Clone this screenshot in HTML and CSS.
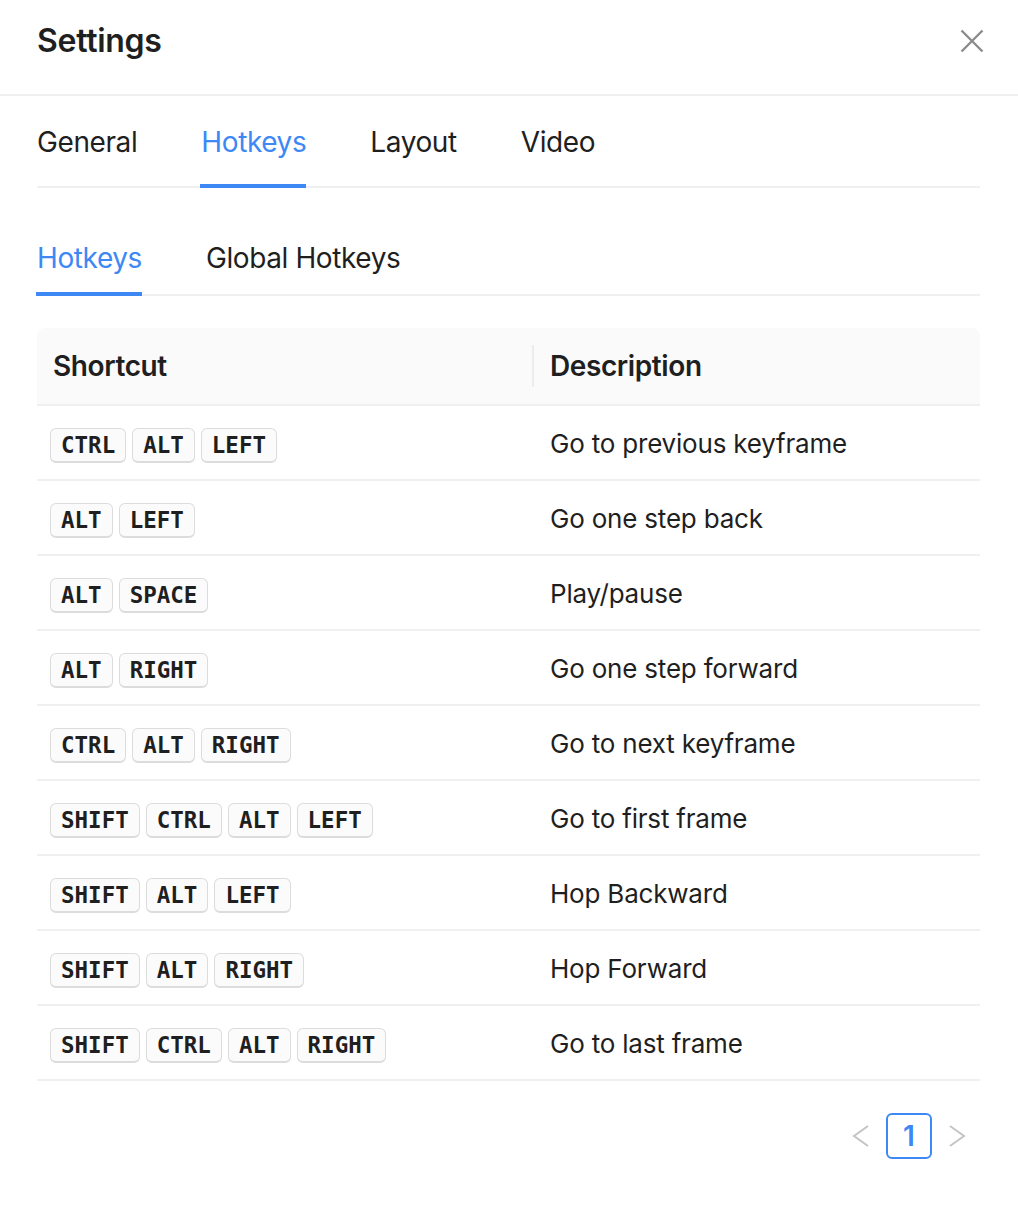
FILE: index.html
```html
<!DOCTYPE html>
<html lang="en">
<head>
<meta charset="utf-8">
<title>Settings</title>
<link rel="stylesheet" href="styles.css">
</head>
<body>
<div class="modal">
  <header class="modal-header">
    <h1 class="title">Settings</h1>
    <button class="close" aria-label="Close">
      <svg width="24" height="24" viewBox="0 0 24 24"><path d="M1.5 1.5 L22.5 22.5 M22.5 1.5 L1.5 22.5" stroke="#8c8c8c" stroke-width="2.4" fill="none"/></svg>
    </button>
  </header>
  <div class="modal-body">
    <nav class="tabs tabs-lg">
      <div class="tab">General</div>
      <div class="tab active">Hotkeys</div>
      <div class="tab">Layout</div>
      <div class="tab">Video</div>
    </nav>
    <nav class="tabs tabs-sm">
      <div class="tab active">Hotkeys</div>
      <div class="tab">Global Hotkeys</div>
    </nav>
    <table class="table">
      <thead>
        <tr><th class="col-keys">Shortcut</th><th class="col-desc">Description</th></tr>
      </thead>
      <tbody>
        <tr><td class="keys"><kbd>CTRL</kbd><kbd>ALT</kbd><kbd>LEFT</kbd></td><td>Go to previous keyframe</td></tr>
        <tr><td class="keys"><kbd>ALT</kbd><kbd>LEFT</kbd></td><td>Go one step back</td></tr>
        <tr><td class="keys"><kbd>ALT</kbd><kbd>SPACE</kbd></td><td>Play/pause</td></tr>
        <tr><td class="keys"><kbd>ALT</kbd><kbd>RIGHT</kbd></td><td>Go one step forward</td></tr>
        <tr><td class="keys"><kbd>CTRL</kbd><kbd>ALT</kbd><kbd>RIGHT</kbd></td><td>Go to next keyframe</td></tr>
        <tr><td class="keys"><kbd>SHIFT</kbd><kbd>CTRL</kbd><kbd>ALT</kbd><kbd>LEFT</kbd></td><td>Go to first frame</td></tr>
        <tr><td class="keys"><kbd>SHIFT</kbd><kbd>ALT</kbd><kbd>LEFT</kbd></td><td>Hop Backward</td></tr>
        <tr><td class="keys"><kbd>SHIFT</kbd><kbd>ALT</kbd><kbd>RIGHT</kbd></td><td>Hop Forward</td></tr>
        <tr><td class="keys"><kbd>SHIFT</kbd><kbd>CTRL</kbd><kbd>ALT</kbd><kbd>RIGHT</kbd></td><td>Go to last frame</td></tr>
      </tbody>
    </table>
    <div class="pagination">
      <span class="page-nav disabled">
        <svg width="46" height="46" viewBox="0 0 46 46"><polyline points="30,13 16,23 30,33" fill="none" stroke="#c4c4c4" stroke-width="2"/></svg>
      </span>
      <span class="page-item active">1</span>
      <span class="page-nav disabled">
        <svg width="46" height="46" viewBox="0 0 46 46"><polyline points="16,13 30,23 16,33" fill="none" stroke="#c4c4c4" stroke-width="2"/></svg>
      </span>
    </div>
  </div>
</div>
</body>
</html>
```

FILE: styles.css
```css
* { box-sizing: border-box; }

html, body {
  margin: 0;
  padding: 0;
  background: #ffffff;
}

body {
  font-family: "Inter", "Noto Sans", "Liberation Sans", sans-serif;
  color: #1f1f1f;
}

.modal {
  width: 1018px;
}

.modal-header {
  display: flex;
  justify-content: space-between;
  align-items: flex-start;
  height: 96px;
  padding: 19px 34px 0 37px;
  border-bottom: 2px solid #f0f0f0;
}

.title {
  margin: 0;
  font-size: 32px;
  line-height: 44px;
  font-weight: 600;
  color: #1f1f1f;
  letter-spacing: -0.3px;
}

.close {
  margin-top: 10px;
  padding: 0;
  border: 0;
  background: transparent;
  width: 24px;
  height: 24px;
  display: flex;
}

.modal-body {
  padding: 0 38px 0 37px;
}

.tabs {
  display: flex;
  gap: 64px;
  border-bottom: 2px solid #f0f0f0;
}

.tab {
  position: relative;
  font-size: 28px;
  line-height: 44px;
  letter-spacing: -0.4px;
  color: #1f1f1f;
  white-space: nowrap;
}

.tabs-lg .tab {
  padding: 24px 0 22px;
}

.tabs-sm {
  margin-top: 32px;
}

.tabs-sm .tab {
  padding: 16px 0 14px;
}

.tab.active {
  color: #3d88f5;
}

.tab.active::after {
  content: "";
  position: absolute;
  left: -1px;
  right: 0;
  bottom: -2px;
  height: 4px;
  background: #3d88f5;
}

.table {
  width: 100%;
  margin-top: 32px;
  border-collapse: separate;
  border-spacing: 0;
  font-size: 26px;
  line-height: 44px;
}

.table th {
  position: relative;
  height: 78px;
  padding: 0 16px;
  text-align: left;
  font-size: 28px;
  font-weight: 600;
  letter-spacing: -0.4px;
  background: #fafafa;
  border-bottom: 2px solid #f0f0f0;
  color: #1f1f1f;
}

.table th.col-keys {
  width: 497px;
  border-top-left-radius: 8px;
}

.table th.col-desc {
  border-top-right-radius: 8px;
}

.table th.col-keys::after {
  content: "";
  position: absolute;
  right: 0;
  top: 50%;
  width: 2px;
  height: 42px;
  transform: translateY(-50%);
  background: #ececec;
}

.table td {
  height: 75px;
  padding: 3px 16px 0;
  border-bottom: 2px solid #f0f0f0;
  color: #1f1f1f;
  letter-spacing: -0.2px;
  vertical-align: middle;
}

.table td.keys {
  padding-left: 13px;
  letter-spacing: 0;
}

kbd {
  display: inline-block;
  margin-right: 6px;
  padding: 1px 10px 1px;
  font-family: "DejaVu Sans Mono", "Liberation Mono", monospace;
  font-weight: 700;
  font-size: 22.5px;
  line-height: 30px;
  color: #1f1f1f;
  background: #fbfbfb;
  border: 1px solid #dcdcdc;
  border-bottom-width: 2px;
  border-radius: 6px;
  vertical-align: middle;
}

.pagination {
  display: flex;
  justify-content: flex-end;
  gap: 2px;
  margin-top: 32px;
}

.page-nav {
  width: 46px;
  height: 46px;
  display: flex;
}

.page-item {
  width: 46px;
  height: 46px;
  display: flex;
  align-items: center;
  justify-content: center;
  font-size: 28px;
  font-weight: 600;
  color: #3d88f5;
  border: 2px solid #3d88f5;
  border-radius: 6px;
}
```
